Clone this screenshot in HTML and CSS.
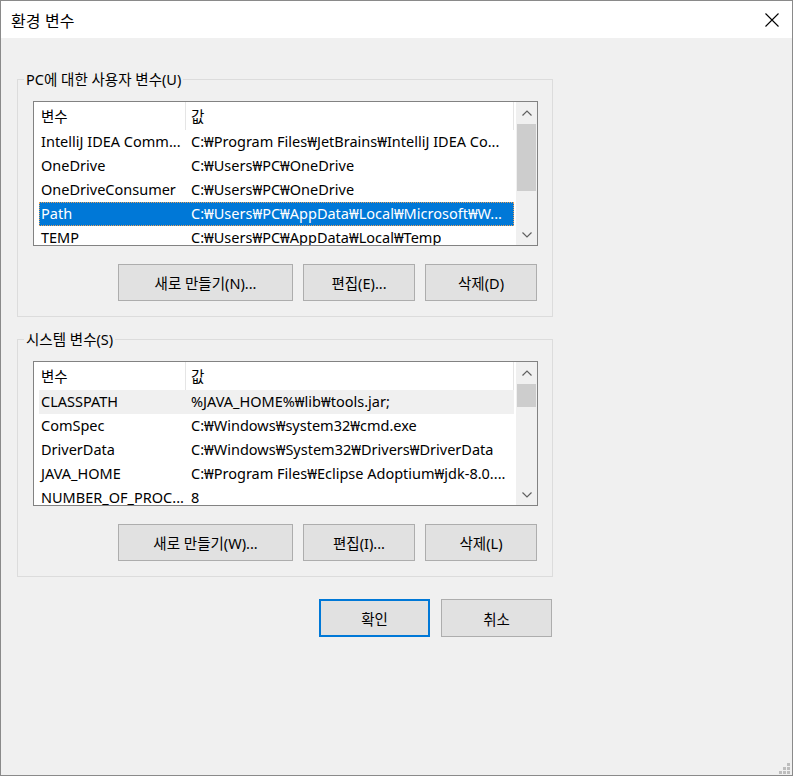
FILE: index.html
```html
<!DOCTYPE html>
<html lang="ko">
<head>
<meta charset="utf-8">
<title>환경 변수</title>
<link rel="stylesheet" href="styles.css">
</head>
<body>
<div class="window">
  <div class="titlebar">
    <span class="title">환경 변수</span>
    <span class="close">
      <svg width="14" height="14" viewBox="0 0 14 14"><path d="M0.5 0.5 L13.5 13.5 M13.5 0.5 L0.5 13.5" stroke="#000" stroke-width="1.1" fill="none"/></svg>
    </span>
  </div>
  <div class="content">
    <fieldset class="group">
      <legend>PC에 대한 사용자 변수(U)</legend>
      <div class="list">
        <div class="list-main">
          <div class="header"><span class="h1">변수</span><span class="h2">값</span></div>
          <div class="row"><span class="c1">IntelliJ IDEA Comm...</span><span class="c2">C:₩Program Files₩JetBrains₩IntelliJ IDEA Co...</span></div>
          <div class="row"><span class="c1">OneDrive</span><span class="c2">C:₩Users₩PC₩OneDrive</span></div>
          <div class="row"><span class="c1">OneDriveConsumer</span><span class="c2">C:₩Users₩PC₩OneDrive</span></div>
          <div class="row selected"><span class="c1">Path</span><span class="c2">C:₩Users₩PC₩AppData₩Local₩Microsoft₩W...</span></div>
          <div class="row"><span class="c1">TEMP</span><span class="c2">C:₩Users₩PC₩AppData₩Local₩Temp</span></div>
        </div>
        <div class="scrollbar">
          <span class="arrow"><svg width="10" height="6" viewBox="0 0 10 6"><path d="M0.5 5.5 L5 1 L9.5 5.5" stroke="#606060" stroke-width="1.2" fill="none"/></svg></span>
          <div class="track"><div class="thumb thumb-user"></div></div>
          <span class="arrow"><svg width="10" height="6" viewBox="0 0 10 6"><path d="M0.5 0.5 L5 5 L9.5 0.5" stroke="#606060" stroke-width="1.2" fill="none"/></svg></span>
        </div>
      </div>
      <div class="buttons">
        <button class="btn wide">새로 만들기(N)...</button>
        <button class="btn">편집(E)...</button>
        <button class="btn">삭제(D)</button>
      </div>
    </fieldset>

    <fieldset class="group second">
      <legend>시스템 변수(S)</legend>
      <div class="list">
        <div class="list-main">
          <div class="header"><span class="h1">변수</span><span class="h2">값</span></div>
          <div class="row inactive"><span class="c1">CLASSPATH</span><span class="c2">%JAVA_HOME%₩lib₩tools.jar;</span></div>
          <div class="row"><span class="c1">ComSpec</span><span class="c2">C:₩Windows₩system32₩cmd.exe</span></div>
          <div class="row"><span class="c1">DriverData</span><span class="c2">C:₩Windows₩System32₩Drivers₩DriverData</span></div>
          <div class="row"><span class="c1">JAVA_HOME</span><span class="c2">C:₩Program Files₩Eclipse Adoptium₩jdk-8.0....</span></div>
          <div class="row"><span class="c1">NUMBER_OF_PROC...</span><span class="c2">8</span></div>
        </div>
        <div class="scrollbar">
          <span class="arrow"><svg width="10" height="6" viewBox="0 0 10 6"><path d="M0.5 5.5 L5 1 L9.5 5.5" stroke="#606060" stroke-width="1.2" fill="none"/></svg></span>
          <div class="track"><div class="thumb thumb-system"></div></div>
          <span class="arrow"><svg width="10" height="6" viewBox="0 0 10 6"><path d="M0.5 0.5 L5 5 L9.5 0.5" stroke="#606060" stroke-width="1.2" fill="none"/></svg></span>
        </div>
      </div>
      <div class="buttons">
        <button class="btn wide">새로 만들기(W)...</button>
        <button class="btn">편집(I)...</button>
        <button class="btn">삭제(L)</button>
      </div>
    </fieldset>

    <div class="dialog-buttons">
      <button class="btn dlg default">확인</button>
      <button class="btn dlg">취소</button>
    </div>
  </div>
  <svg class="grip" width="11" height="11" viewBox="0 0 11 11">
    <rect x="8" y="0" width="3" height="3" fill="#bdbdbd"/>
    <rect x="4" y="4" width="3" height="3" fill="#bdbdbd"/>
    <rect x="8" y="4" width="3" height="3" fill="#bdbdbd"/>
    <rect x="0" y="8" width="3" height="3" fill="#bdbdbd"/>
    <rect x="4" y="8" width="3" height="3" fill="#bdbdbd"/>
    <rect x="8" y="8" width="3" height="3" fill="#bdbdbd"/>
  </svg>
</div>
</body>
</html>
```

FILE: styles.css
```css
html, body {
  margin: 0;
  padding: 0;
  background: #ffffff;
}

body {
  font-family: "Noto Sans", "Noto Sans CJK KR", sans-serif;
  font-size: 14.5px;
  color: #000;
}

.window {
  position: relative;
  width: 791px;
  height: 774px;
  border: 1px solid #8a8a8a;
  background: #f0f0f0;
  display: flex;
  flex-direction: column;
}

.titlebar {
  height: 37px;
  background: #ffffff;
  display: flex;
  align-items: center;
  justify-content: space-between;
  flex-shrink: 0;
}

.title {
  padding-left: 10px;
  font-family: "Noto Sans CJK KR", "Noto Sans", sans-serif;
  font-size: 16px;
}

.close {
  display: flex;
  padding-right: 13px;
}

.content {
  padding: 31px 0 0 16px;
}

.group {
  box-sizing: border-box;
  width: 536px;
  margin: 0;
  padding: 12px 14px 15px 15px;
  border: 1px solid #dcdcdc;
  min-width: 0;
}

.group.second {
  margin-top: 12px;
}

.group legend {
  margin-left: -9px;
  padding: 0 2px;
  font-family: "Noto Sans", "Noto Sans CJK KR", sans-serif;
  font-size: 14.5px;
  line-height: 20px;
}

.list {
  box-sizing: border-box;
  height: 145px;
  border: 1px solid #828282;
  background: #ffffff;
  display: flex;
}

.list-main {
  width: 482px;
  overflow: hidden;
}

.header {
  height: 28px;
  display: flex;
  line-height: 28px;
}

.h1 {
  box-sizing: border-box;
  width: 152px;
  padding-left: 7px;
  border-right: 1px solid #e5e5e5;
}

.h2 {
  box-sizing: border-box;
  width: 328px;
  padding-left: 5px;
  border-right: 1px solid #e5e5e5;
}

.row {
  box-sizing: border-box;
  height: 24px;
  line-height: 23px;
  margin: 0 2px 0 5px;
  display: flex;
  white-space: nowrap;
}

.c1 {
  box-sizing: border-box;
  width: 147px;
  padding-left: 2px;
  overflow: hidden;
  flex-shrink: 0;
}

.c2 {
  padding-left: 5px;
  overflow: hidden;
}

.row.selected {
  background: #0078d7;
  color: #ffffff;
  outline: 1px dotted #e9a35a;
  outline-offset: -1px;
}

.row.inactive {
  background: #f0f0f0;
}

.scrollbar {
  width: 21px;
  background: #f0f0f0;
  display: flex;
  flex-direction: column;
}

.arrow {
  height: 21px;
  display: flex;
  align-items: center;
  justify-content: center;
  flex-shrink: 0;
}

.track {
  flex: 1;
}

.thumb {
  margin: 1px 1px 0 1px;
  background: #cdcdcd;
}

.thumb-user {
  height: 67px;
}

.thumb-system {
  height: 23px;
}

.buttons {
  display: flex;
  justify-content: flex-end;
  gap: 10px;
  margin-top: 18px;
  padding-right: 1px;
}

.btn {
  box-sizing: border-box;
  width: 112px;
  height: 37px;
  border: 1px solid #adadad;
  background: #e1e1e1;
  font-family: "Noto Sans", "Noto Sans CJK KR", sans-serif;
  font-size: 14.5px;
  color: #000;
  padding: 0;
  margin: 0;
}

.btn.wide {
  width: 175px;
}

.dialog-buttons {
  box-sizing: border-box;
  width: 536px;
  display: flex;
  justify-content: flex-end;
  gap: 11px;
  padding-right: 1px;
  margin-top: 22px;
}

.btn.dlg {
  width: 111px;
  height: 38px;
}

.btn.default {
  border: 2px solid #0078d7;
}

.grip {
  position: absolute;
  right: 2px;
  bottom: 1px;
}
```
